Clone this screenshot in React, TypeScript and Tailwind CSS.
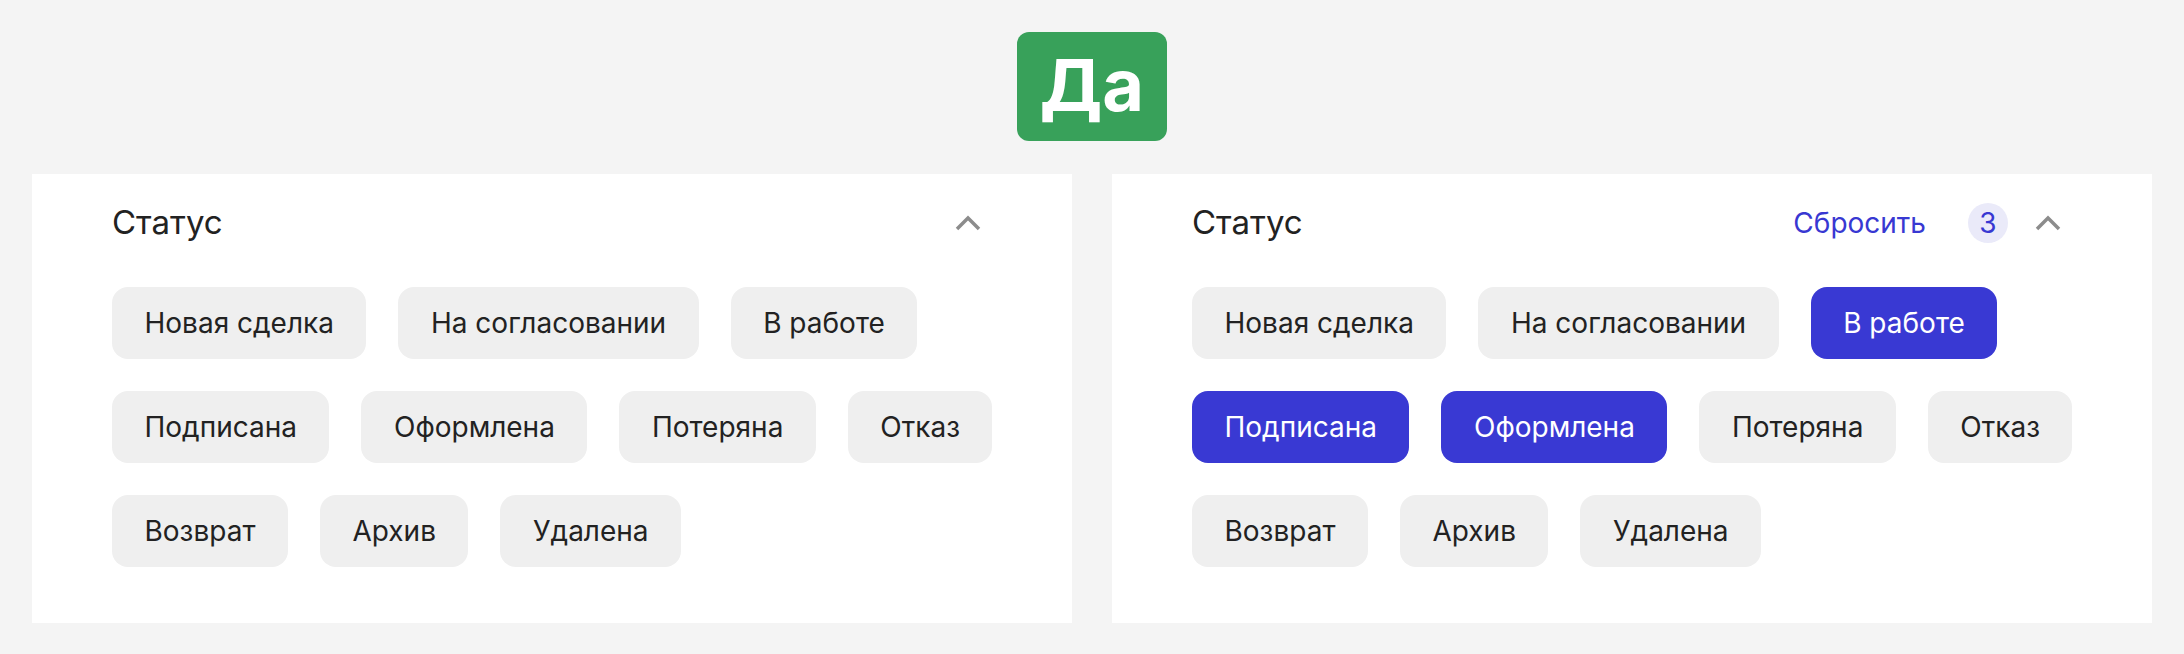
const statuses = [
  'Новая сделка',
  'На согласовании',
  'В работе',
  'Подписана',
  'Оформлена',
  'Потеряна',
  'Отказ',
  'Возврат',
  'Архив',
  'Удалена',
]

function ChevronUp() {
  return (
    <svg width="26" height="16" viewBox="0 0 26 16" fill="none">
      <path d="M2 14 L13 3 L24 14" stroke="#8c8c8c" strokeWidth="3.5" />
    </svg>
  )
}

function StatusPanel({ selected, showReset }: { selected: string[]; showReset?: boolean }) {
  return (
    <div className="flex-1 bg-white pt-[29px] pb-[56px] pl-[80px] pr-[40px]">
      <div className="flex items-center h-10 mr-[51px]">
        <h2 className="text-[33px] text-[#222]">Статус</h2>
        <div className="ml-auto flex items-center">
          {showReset && (
            <>
              <button className="text-[28px] text-[#3838d2]">Сбросить</button>
              <span className="ml-[42px] w-10 h-10 rounded-full bg-[#eaeaf9] text-[#3838d2] text-[28px] flex items-center justify-center">
                {selected.length}
              </span>
            </>
          )}
          <span className={showReset ? 'ml-[27px] flex' : 'flex'}>
            <ChevronUp />
          </span>
        </div>
      </div>
      <div className="mt-[44px] flex flex-wrap gap-8">
        {statuses.map((s) => {
          const active = selected.includes(s)
          return (
            <button
              key={s}
              className={
                active
                  ? 'h-[72px] px-[32.5px] rounded-2xl text-[28px] bg-[#3939d3] text-white'
                  : 'h-[72px] px-[32.5px] rounded-2xl text-[28px] bg-[#efefef] text-[#222]'
              }
            >
              {s}
            </button>
          )
        })}
      </div>
    </div>
  )
}

export default function App() {
  return (
    <div className="w-[2184px] h-[654px] bg-[#f4f4f4] px-8 pt-8 font-['Inter','Noto_Sans',sans-serif]">
      <div className="flex justify-center">
        <div className="w-[150px] h-[109px] rounded-xl bg-[#38a15a] text-white font-bold text-[72px] flex items-center justify-center leading-none pb-1">
          Да
        </div>
      </div>
      <div className="mt-[33px] flex gap-10">
        <StatusPanel selected={[]} />
        <StatusPanel selected={['В работе', 'Подписана', 'Оформлена']} showReset />
      </div>
    </div>
  )
}
